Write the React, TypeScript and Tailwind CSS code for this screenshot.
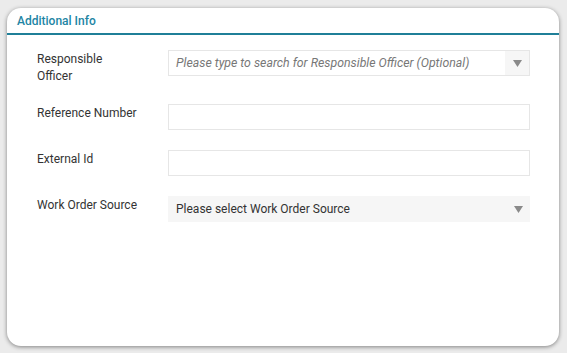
import { useState } from "react";

function Arrow() {
  return (
    <svg width="9" height="7" viewBox="0 0 9 7" className="fill-[#8a8a8a]">
      <path d="M0 0h9L4.5 7z" />
    </svg>
  );
}

export default function App() {
  const [refNo, setRefNo] = useState("");
  const [extId, setExtId] = useState("");

  return (
    <div className="h-screen w-screen overflow-hidden bg-[#ebebeb] pt-[8px] pl-[7px] font-['Roboto',sans-serif]">
      <div className="h-[338px] w-[552px] rounded-[14px] bg-white shadow-[0_1px_4px_rgba(0,0,0,0.45)]">
        {/* Header */}
        <div className="flex h-[27px] items-center border-b-2 border-[#1f7f98] pl-[10px]">
          <span className="text-[12px] font-medium text-[#2285a4]">Additional Info</span>
        </div>

        {/* Form */}
        <div className="flex flex-col gap-[20px] pt-[15px] pl-[30px]">
          <div className="flex h-[34px] items-start">
            <label className="w-[131px] pt-[1px] text-[12px] leading-[17px] text-[#333]">
              Responsible
              <br />
              Officer
            </label>
            <div className="flex h-[26px] w-[362px] items-center border border-[#e6e6e6] bg-white">
              <span className="flex-1 truncate pl-[7px] text-[12.3px] italic text-[#777]">
                Please type to search for Responsible Officer (Optional)
              </span>
              <div className="flex h-full w-[24px] items-center justify-center bg-[#f6f6f6]">
                <Arrow />
              </div>
            </div>
          </div>

          <div className="flex h-[26px] items-start">
            <label className="w-[131px] pt-[1px] text-[12px] leading-[17px] text-[#333]">
              Reference Number
            </label>
            <input
              value={refNo}
              onChange={(e) => setRefNo(e.target.value)}
              className="h-[26px] w-[362px] border border-[#e6e6e6] bg-white px-[8px] text-[12px] outline-none"
            />
          </div>

          <div className="flex h-[26px] items-start">
            <label className="w-[131px] pt-[1px] text-[12px] leading-[17px] text-[#333]">
              External Id
            </label>
            <input
              value={extId}
              onChange={(e) => setExtId(e.target.value)}
              className="h-[26px] w-[362px] border border-[#e6e6e6] bg-white px-[8px] text-[12px] outline-none"
            />
          </div>

          <div className="flex h-[26px] items-start">
            <label className="w-[131px] pt-[1px] text-[12px] leading-[17px] text-[#333]">
              Work Order Source
            </label>
            <div className="flex h-[26px] w-[362px] items-center bg-[#f6f6f6]">
              <span className="flex-1 pl-[8px] text-[12px] text-[#333]">
                Please select Work Order Source
              </span>
              <div className="flex w-[24px] items-center justify-center">
                <Arrow />
              </div>
            </div>
          </div>
        </div>
      </div>
    </div>
  );
}
